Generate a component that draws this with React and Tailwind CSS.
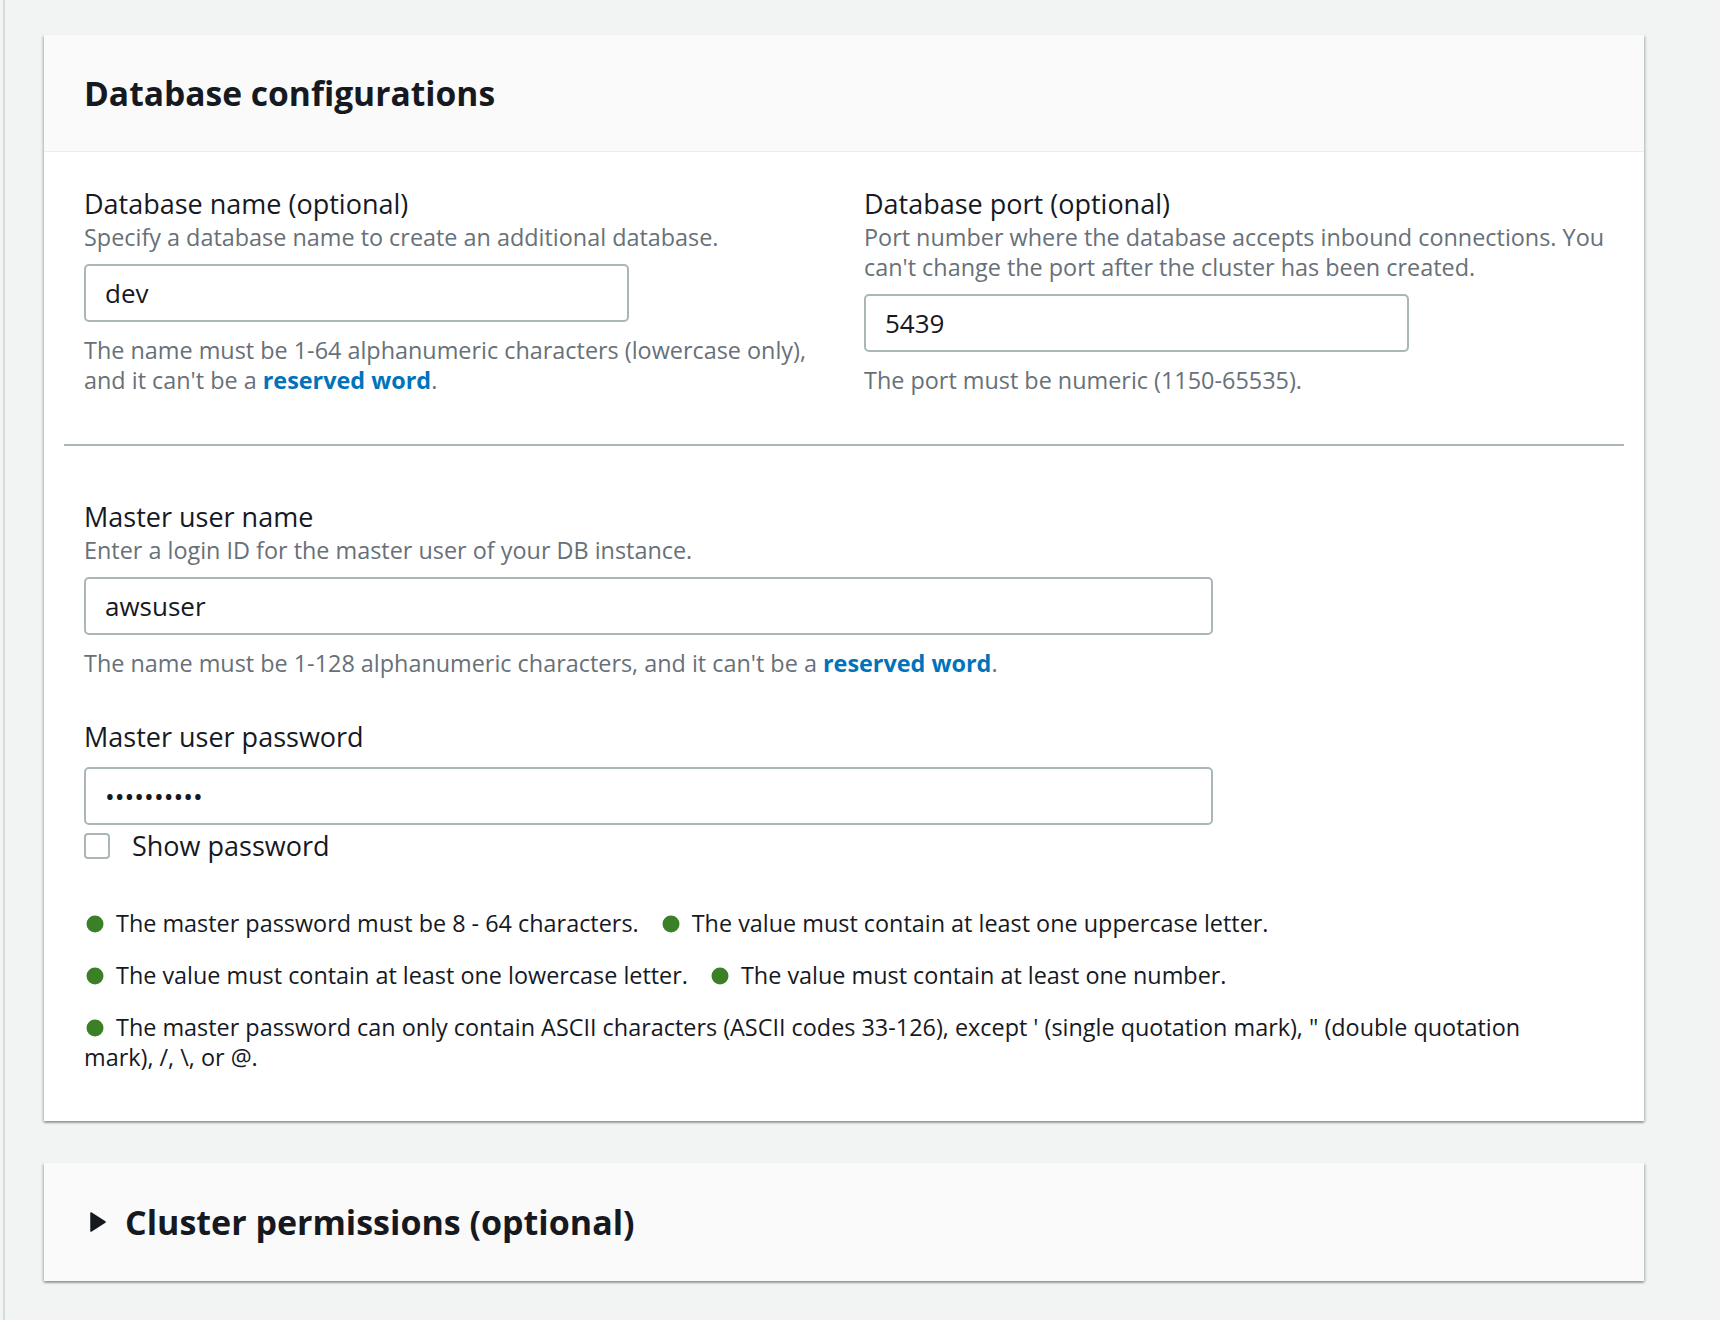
import { useState } from 'react';

const font = { fontFamily: '"Open Sans", "Liberation Sans", sans-serif' };

function Dot() {
  return (
    <svg width="22" height="22" viewBox="0 0 22 22" className="inline-block align-middle mr-[10px] -mt-[3px]">
      <circle cx="11" cy="11" r="8.5" fill="#3b7f27" />
    </svg>
  );
}

function Field({ label, desc, value, help, type = 'text', inputWidth = 'w-[545px]' }) {
  return (
    <div>
      <div className="text-[27px] leading-[36px] text-[#16191f]">{label}</div>
      {desc && <div className="text-[23.4px] leading-[30px] text-[#687078]">{desc}</div>}
      <input
        type={type}
        defaultValue={value}
        className={`mt-[12px] block h-[58px] ${inputWidth} rounded-[5px] border-2 border-[#aab7b8] bg-white px-[19px] text-[26px] text-[#16191f] outline-none`}
      />
      {help && <div className="mt-[13px] text-[23.4px] leading-[30px] text-[#687078]">{help}</div>}
    </div>
  );
}

const Reserved = () => <a href="#" className="font-bold text-[#0073bb]">reserved word</a>;

export default function App() {
  const [show, setShow] = useState(false);
  const rules = [
    'The master password must be 8 - 64 characters.',
    'The value must contain at least one uppercase letter.',
    'The value must contain at least one lowercase letter.',
    'The value must contain at least one number.',
    'The master password can only contain ASCII characters (ASCII codes 33-126), except \' (single quotation mark), " (double quotation mark), /, \\, or @.',
  ];

  return (
    <div style={font} className="min-h-screen bg-[#f2f3f3] pl-[3px]">
      <div className="min-h-screen border-l-2 border-[#d5dbdb] pt-[35px] pb-[39px] pl-[39px]">
        <section className="w-[1600px] bg-white shadow-[0_2px_2px_0_rgba(0,28,36,0.3),2px_1px_2px_0_rgba(0,28,36,0.12),-2px_1px_2px_0_rgba(0,28,36,0.12)]">
          <header className="border-b border-[#eaeded] bg-[#fafafa] px-[40px] py-[38px]">
            <h2 className="text-[33.6px] font-bold leading-[40px] text-[#16191f]">Database configurations</h2>
          </header>
          <div className="px-[40px] pt-[34px] pb-[49px]">
            <div className="-mr-[20px] grid grid-cols-[740px_1fr] gap-x-[40px]">
              <Field
                label="Database name (optional)"
                desc="Specify a database name to create an additional database."
                value="dev"
                help={<>The name must be 1-64 alphanumeric characters (lowercase only), and it can't be a <Reserved />.</>}
              />
              <Field
                label="Database port (optional)"
                desc="Port number where the database accepts inbound connections. You can't change the port after the cluster has been created."
                value="5439"
                help="The port must be numeric (1150-65535)."
              />
            </div>

            <div className="-mx-[20px] mt-[49px] h-[2px] bg-[#aab7b8]" />

            <div className="mt-[53px]">
              <Field
                label="Master user name"
                desc="Enter a login ID for the master user of your DB instance."
                value="awsuser"
                inputWidth="w-[1129px]"
                help={<>The name must be 1-128 alphanumeric characters, and it can't be a <Reserved />.</>}
              />
            </div>

            <div className="mt-[41px]">
              <Field label="Master user password" value="Awsuser123" type={show ? 'text' : 'password'} inputWidth="w-[1129px]" />
              <label className="mt-[3px] flex h-[36px] cursor-pointer items-center gap-[22px]">
                <input
                  type="checkbox"
                  checked={show}
                  onChange={(e) => setShow(e.target.checked)}
                  className="h-[26px] w-[26px] appearance-none rounded-[4px] border-2 border-[#aab7b8] bg-white checked:bg-[#0073bb]"
                />
                <span className="text-[27px] leading-[36px] text-[#16191f]">Show password</span>
              </label>
            </div>

            <div className="mt-[44px] flex max-w-[1480px] flex-wrap gap-x-[21px] gap-y-[22px] text-[23.4px] leading-[30px] text-[#16191f]">
              {rules.map((r) => (
                <div key={r}>
                  <Dot />
                  {r}
                </div>
              ))}
            </div>
          </div>
        </section>

        <section className="mt-[42px] flex h-[118px] w-[1600px] items-center gap-[19px] bg-[#fafafa] px-[46px] shadow-[0_2px_2px_0_rgba(0,28,36,0.3),2px_1px_2px_0_rgba(0,28,36,0.12),-2px_1px_2px_0_rgba(0,28,36,0.12)]">
          <svg width="16" height="20" viewBox="0 0 16 20">
            <path d="M1 1 L15 10 L1 19 Z" fill="#16191f" strokeLinejoin="round" stroke="#16191f" strokeWidth="1.5" />
          </svg>
          <h2 className="text-[34px] font-bold leading-[40px] text-[#16191f]">Cluster permissions (optional)</h2>
        </section>
      </div>
    </div>
  );
}
